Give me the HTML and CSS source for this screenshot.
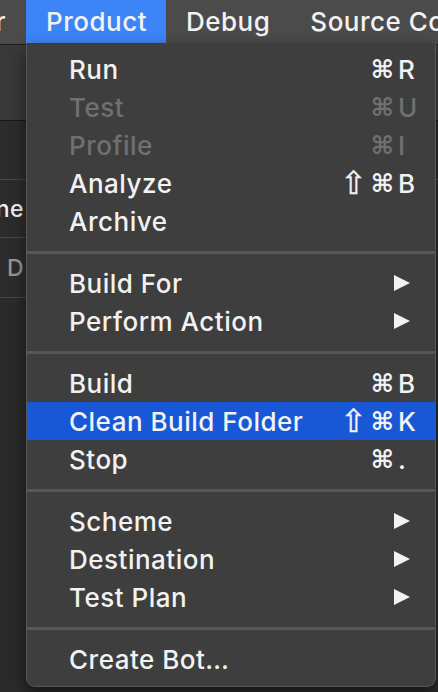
FILE: index.html
```html
<!DOCTYPE html>
<html lang="en">
  <head>
    <meta charset="utf-8">
    <title>Product menu</title>
    <link rel="stylesheet" href="styles.css">
  </head>
  <body>
    <nav class="menubar">
      <span class="title first">Editor</span>
      <span class="title open">Product</span>
      <span class="title">Debug</span>
      <span class="title">Source Control</span>
    </nav>
    <div class="desk">
      <div class="band toolbar"></div>
      <div class="band tabs"></div>
      <div class="band row"><span>iPhone</span></div>
      <div class="band row dim"><span>D</span></div>
      <div class="band rest"></div>
      <ul class="menu">
        <li class="item"><span class="label">Run</span><span class="keys"><span class="cmd">&#x2318;</span><span class="key">R</span></span></li>
        <li class="item off"><span class="label">Test</span><span class="keys"><span class="cmd">&#x2318;</span><span class="key">U</span></span></li>
        <li class="item off"><span class="label">Profile</span><span class="keys"><span class="cmd">&#x2318;</span><span class="key">I</span></span></li>
        <li class="item"><span class="label">Analyze</span><span class="keys"><span class="shift">&#x21E7;</span><span class="cmd">&#x2318;</span><span class="key">B</span></span></li>
        <li class="item"><span class="label">Archive</span></li>
        <li class="sep"></li>
        <li class="item"><span class="label">Build For</span><svg class="arrow" viewBox="0 0 18 18"><path d="M1 1 L17 9 L1 17 Z"/></svg></li>
        <li class="item"><span class="label">Perform Action</span><svg class="arrow" viewBox="0 0 18 18"><path d="M1 1 L17 9 L1 17 Z"/></svg></li>
        <li class="sep"></li>
        <li class="item"><span class="label">Build</span><span class="keys"><span class="cmd">&#x2318;</span><span class="key">B</span></span></li>
        <li class="item hot"><span class="label">Clean Build Folder</span><span class="keys"><span class="shift">&#x21E7;</span><span class="cmd">&#x2318;</span><span class="key">K</span></span></li>
        <li class="item"><span class="label">Stop</span><span class="keys"><span class="cmd">&#x2318;</span><span class="key">.</span></span></li>
        <li class="sep"></li>
        <li class="item"><span class="label">Scheme</span><svg class="arrow" viewBox="0 0 18 18"><path d="M1 1 L17 9 L1 17 Z"/></svg></li>
        <li class="item"><span class="label">Destination</span><svg class="arrow" viewBox="0 0 18 18"><path d="M1 1 L17 9 L1 17 Z"/></svg></li>
        <li class="item"><span class="label">Test Plan</span><svg class="arrow" viewBox="0 0 18 18"><path d="M1 1 L17 9 L1 17 Z"/></svg></li>
        <li class="sep"></li>
        <li class="item"><span class="label">Create Bot&hellip;</span></li>
      </ul>
    </div>
  </body>
</html>
```

FILE: styles.css
```css
html, body {
  margin: 0;
  height: 100%;
  overflow: hidden;
}
body {
  background-color: rgb(43, 43, 43);
  color: rgb(242, 242, 242);
  font-family: Inter, "DejaVu Sans", sans-serif;
  font-size: 26px;
  font-weight: 500;
  letter-spacing: 0.5px;
}
.menubar {
  display: flex;
  height: 44px;
  background-color: rgb(75, 75, 75);
  white-space: nowrap;
  overflow: hidden;
  & .title {
    flex: none;
    padding: 0 20px;
    line-height: 43px;
    &.first {
      display: flex;
      justify-content: flex-end;
      box-sizing: border-box;
      width: 26px;
      padding: 0 20px 0 0;
      overflow: hidden;
    }
    &.open {
      box-sizing: border-box;
      width: 140px;
      background-color: rgb(61, 133, 247);
    }
  }
}
.desk {
  position: relative;
  display: flex;
  flex-direction: column;
  height: calc(100% - 44px);
  border-top: 1px solid rgb(30, 30, 30);
}
.band {
  flex: none;
  box-sizing: border-box;
  &.toolbar {
    height: 76px;
    background-color: rgb(57, 57, 57);
    border-bottom: 1px solid rgb(24, 24, 24);
  }
  &.tabs {
    height: 59px;
    background-color: rgb(44, 44, 44);
    border-bottom: 1px solid rgb(70, 70, 70);
  }
  &.row {
    display: flex;
    justify-content: flex-end;
    align-items: center;
    width: 26px;
    height: 58px;
    padding-right: 2px;
    overflow: hidden;
    white-space: nowrap;
    background-color: rgb(44, 44, 44);
    border-bottom: 1px solid rgb(72, 72, 72);
    font-size: 23px;
    &.dim {
      height: 60px;
      color: rgb(150, 150, 150);
    }
  }
  &.rest {
    flex: 1;
    background-color: rgb(42, 42, 42);
  }
}
.menu {
  position: absolute;
  left: 26px;
  top: -2px;
  width: 410px;
  box-sizing: border-box;
  margin: 0;
  padding: 7px 0 8px;
  list-style: none;
  background-color: rgb(62, 62, 62);
  border: 1px solid rgb(88, 88, 88);
  border-top: none;
  border-radius: 0 0 9px 9px;
  box-shadow: 0 6px 16px rgba(0, 0, 0, 0.5);
}
.item {
  display: flex;
  align-items: center;
  height: 38px;
  padding: 0 19px 0 42px;
  white-space: nowrap;
  &.off {
    color: rgb(112, 112, 112);
  }
  &.hot {
    background-color: rgb(24, 88, 214);
  }
  & .label {
    flex: 1;
  }
}
.keys {
  display: flex;
  align-items: center;
  letter-spacing: 0;
  & .shift {
    margin-right: 4px;
    font-family: "DejaVu Sans", sans-serif;
    font-size: 32px;
    line-height: 1;
    -webkit-text-stroke: 0.4px currentColor;
  }
  & .cmd {
    font-family: "DejaVu Sans", sans-serif;
    font-size: 25px;
    font-weight: bold;
    line-height: 1;
  }
  & .key {
    width: 18px;
    margin-left: 4px;
  }
}
.arrow {
  width: 18px;
  height: 18px;
  margin-right: 5px;
  fill: rgb(242, 242, 242);
}
.sep {
  height: 3px;
  margin: 11px 0 10px;
  background-color: rgb(86, 86, 86);
}
```
